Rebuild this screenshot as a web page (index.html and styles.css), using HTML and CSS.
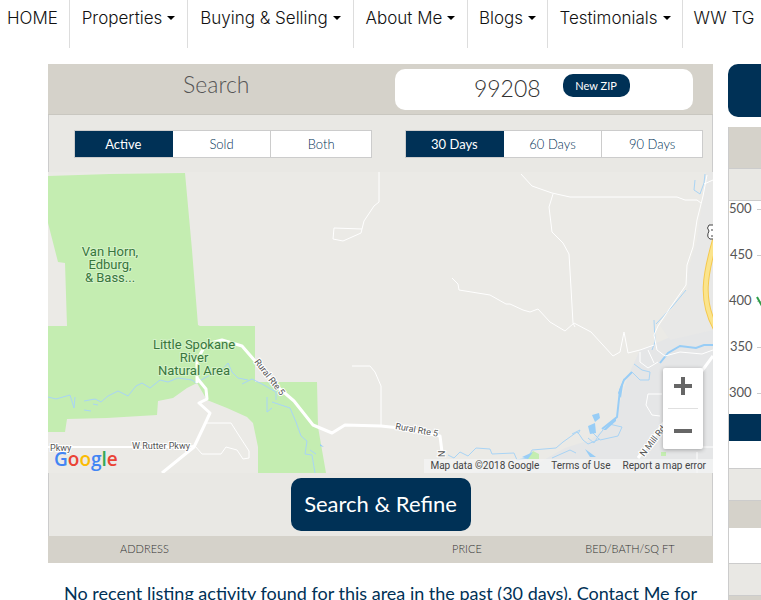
FILE: index.html
```html
<!DOCTYPE html>
<html lang="en">
<head>
    <meta charset="UTF-8">
    <meta name="viewport" content="width=device-width, initial-scale=1.0">
    <title>Search 99208</title>
    <link rel="stylesheet" href="styles.css">
</head>
<body>
    <nav class="main-nav">
        <a href="#">HOME</a>
        <a href="#" class="has-menu">Properties</a>
        <a href="#" class="has-menu">Buying &amp; Selling</a>
        <a href="#" class="has-menu">About Me</a>
        <a href="#" class="has-menu">Blogs</a>
        <a href="#" class="has-menu">Testimonials</a>
        <a href="#">WW TG</a>
    </nav>

    <div class="page">
        <main class="search-panel">
            <header class="panel-header">
                <h1>Search</h1>
                <div class="zip-box">
                    <span class="zip">99208</span>
                    <button class="zip-button">New ZIP</button>
                </div>
            </header>

            <div class="filters">
                <div class="btn-group">
                    <button class="active">Active</button>
                    <button>Sold</button>
                    <button>Both</button>
                </div>
                <div class="btn-group">
                    <button class="active">30 Days</button>
                    <button>60 Days</button>
                    <button>90 Days</button>
                </div>
            </div>

            <div class="map">
                <svg class="map-canvas" viewBox="48 172 665 301" preserveAspectRatio="xMidYMid slice">
                    <rect x="48" y="172" width="665" height="301" fill="#ebeae6"/>
                    <!-- built-up area -->
                    <path fill="#e5e6e7" d="M713 320L668 338 640 350 628 376 620 402 616 420 590 440 565 448 540 462 470 473H713Z"/>
                    <path fill="#e8e8e7" d="M713 172H706L697 240 688 270 687 290 660 325 670 340 713 330Z"/>
                    <!-- parks -->
                    <path fill="#c4edb1" d="M48 176L110 174 185 173 192 250 198 325 200 326H255V382H317L318 427 326 473H258V447L253 423 247 417 227 408 207 400 197 383 187 388 173 398 158 401 157 415 107 418 67 419 65 432H48V326H67L65 263 58 262 48 223Z"/>
                    <path fill="#c4edb1" d="M526 459L533 451 539 454V459ZM661 452H666V456H661Z"/>
                    <!-- water -->
                    <g class="water">
                        <path d="M48 397L56 399 70 395 74 408 75 397M84 401L95 399 101 402 108 396 118 391 128 396 136 386 142 383 150 388 160 380 168 382 178 378 192 380 196 383 210 375 222 370 228 363 232 372 238 378 248 380"/>
                        <path d="M84 410L91 411M93 404L98 405M242 384L252 379 262 384 276 392 276 400M267 397V412L272 408M272 402L290 408 296 422 301 436 307 441 305 454 312 455 315 473M310 450L316 454"/>
                        <path d="M448 455L454 458 460 452 468 456 476 448 490 449 492 454 514 453 517 460 528 458 532 450 556 448 563 442 577 432 579 434 583 440 588 444 600 439M578 434L580 430 572 434M588 438L594 443 599 435 603 430"/>
                        <path d="M552 458L570 450 576 453M592 432L600 440 618 436 622 427 609 424"/>
                        <path d="M634 364L642 370 650 372 649 380 640 380 632 372"/>
                        <path d="M654 320L655 342 652 350M656 324L672 307 686 290M695 180L694 190 700 194 704 183 705 174"/>
                    </g>
                    <path class="river" d="M602 429L617 417 620 390 624 380 632 372M660 363L668 353 680 346 696 348 704 345 713 345"/>
                    <path class="lake" d="M592 415L599 413 600 418 595 422ZM588 426L595 423 596 433 590 434ZM603 430L616 417V421L606 430ZM585 449L596 457 590 457ZM320 444L324 447 320 446ZM522 457L533 452 528 459ZM618 393L624 378 621 398Z"/>
                    <!-- minor roads -->
                    <g class="road minor">
                        <path d="M379 172V202L374 206 364 221 361 233 343 241 333 239 334 228 362 229"/>
                        <path d="M452 278L458 284 459 290 490 295 506 304 510 304 523 310 530 312 538 309 550 322 560 328 565 331 574 323 591 332 613 356 620 352 624 332 628 353 640 350 654 345"/>
                        <path d="M521 174L532 186 552 193 570 197H677L685 200 697 200 701 203M553 194L549 207 552 232 563 243 569 254 571 288 573 323 575 327"/>
                        <path d="M707 175L703 196 697 220 693 247 687 265 686 285 670 308 658 326 654 335 657 350 665 356 680 352 702 354 713 350M713 180L704 184"/>
                        <path d="M352 366H370L375 372 381 386V426"/>
                        <path d="M206 423H231L238 434 249 451 249 458 243 459 237 450 226 447 221 454H202L195 446"/>
                        <path d="M640 352V362L648 368 658 362M648 350L654 363M662 394H648L646 405 652 415 660 416M697 447H713M697 452V473"/>
                    </g>
                    <path class="road thick" d="M48 447H185L194 446"/>
                    <!-- main roads -->
                    <path class="road major" d="M197 383V360L206 344 222 340 242 346 255 361 280 389 294 401 313 425 332 433 345 425 381 426 400 428 440 436 442 452"/>
                    <path class="road major" d="M197 378L206 389 207 399 199 403 210 413 204 426 194 447 162 473M638 458L713 356"/>
                    <path fill="none" stroke="#f5c94e" stroke-width="6" d="M715 240C705 275 700 300 716 329"/>
                    <path fill="none" stroke="#fbe48c" stroke-width="4" d="M715 240C705 275 700 300 716 329"/>
                    <path fill="#fff" stroke="#444" d="M716 225H709Q706 228 709 231 706 237 710 239H716"/>
                    <path fill="none" stroke="#444" d="M711 230H714M711 236H714"/>

                    <g class="park-label">
                        <text x="110" y="256">Van Horn,</text>
                        <text x="110" y="269">Edburg,</text>
                        <text x="110" y="282">&amp; Bass...</text>
                        <text x="194" y="349">Little Spokane</text>
                        <text x="194" y="362">River</text>
                        <text x="194" y="375">Natural Area</text>
                    </g>
                    <g class="road-label">
                        <text x="50" y="451">Pkwy</text>
                        <text x="132" y="449">W Rutter Pkwy</text>
                        <text transform="translate(254 362) rotate(52)">Rural Rte 5</text>
                        <text transform="translate(395 429) rotate(10)">Rural Rte 5</text>
                        <text transform="translate(445 457) rotate(-90)">N</text>
                        <text transform="translate(644 457) rotate(-52)">N Mill Rd</text>
                    </g>
                </svg>
                <div class="google" aria-label="Google"><span class="b">G</span><span class="r">o</span><span class="y">o</span><span class="b">g</span><span class="g">l</span><span class="r">e</span></div>
                <div class="map-zoom">
                    <button aria-label="Zoom in">
                        <svg width="18" height="18" viewBox="0 0 18 18"><path d="M7 0h4v7h7v4h-7v7H7v-7H0V7h7z"/></svg>
                    </button>
                    <button aria-label="Zoom out">
                        <svg width="18" height="18" viewBox="0 0 18 18"><path d="M0 7h18v4H0z"/></svg>
                    </button>
                </div>
                <div class="map-credits">
                    <span>Map data ©2018 Google</span>
                    <a href="#">Terms of Use</a>
                    <a href="#">Report a map error</a>
                </div>
            </div>

            <div class="actions">
                <button class="refine-button">Search &amp; Refine</button>
            </div>

            <table class="listings">
                <thead>
                    <tr>
                        <th class="col-address">ADDRESS</th>
                        <td class="col-blank"></td>
                        <th class="col-price">PRICE</th>
                        <th class="col-size">BED/BATH/SQ FT</th>
                    </tr>
                </thead>
            </table>
            <p class="message">No recent listing activity found for this area in the past (30 days). Contact Me for</p>
        </main>

        <aside class="stats">
            <div class="stats-button"></div>
            <div class="stats-card">
                <div class="bar dark tall"></div>
                <div class="bar light"></div>
                <svg class="chart" width="32" height="213" viewBox="0 0 32 213">
                    <g class="axis">
                        <text x="0" y="12">500</text>
                        <text x="1" y="58">450</text>
                        <text x="0" y="104">400</text>
                        <text x="1" y="150">350</text>
                        <text x="0" y="196">300</text>
                    </g>
                    <path fill="#ccc" d="M28 8h4v1h-4zM28 54h4v1h-4zM28 100h4v1h-4zM28 146h4v1h-4zM28 192h4v1h-4z"/>
                    <path fill="none" stroke="#2e9e48" stroke-width="2" d="M28 96l5 9"/>
                </svg>
                <div class="bar navy"></div>
                <div class="bar white"></div>
                <div class="bar light"></div>
                <div class="bar dark"></div>
                <div class="bar white wide"></div>
                <div class="bar light"></div>
                <div class="bar dark"></div>
            </div>
        </aside>
    </div>
</body>
</html>
```

FILE: styles.css
```css
* {
    box-sizing: border-box;
}
html {
    overflow: hidden;
}
body {
    margin: 0;
    background: #fff;
    font-family: Lato, "Liberation Sans", sans-serif;
    color: #003156;
}
button {
    font-family: inherit;
    border: none;
    padding: 0;
    cursor: pointer;
}
a {
    text-decoration: none;
    color: inherit;
}

/* navigation */
.main-nav {
    display: grid;
    grid-template-columns: 70fr 118fr 166fr 114fr 80fr 135fr 78fr;
    height: 48px;
    font-family: Inter, sans-serif;
    font-size: 17px;
    font-weight: 300;
    line-height: 36px;
    color: #111;
}
.main-nav a {
    display: flex;
    justify-content: center;
    gap: 5px;
    min-width: 0;
    border-right: 1px solid #ddd;
    white-space: nowrap;
}
.main-nav a:first-child {
    padding-right: 4px;
}
.main-nav a:last-child {
    border-right: none;
    padding-left: 4px;
}
.has-menu::after {
    content: "";
    align-self: flex-start;
    margin-top: 16px;
    border: 4px solid transparent;
    border-top-color: #000;
    border-bottom: none;
}

.page {
    display: grid;
    grid-template-columns: minmax(0, 1fr) 33px;
    gap: 15px;
    padding: 16px 0 0 48px;
}

/* search panel */
.panel-header {
    display: grid;
    grid-template-columns: 1fr 1fr;
    height: 51px;
    background: #d5d2ca;
    border-bottom: 1px solid #c9c7c0;
}
.panel-header h1 {
    margin: 0;
    padding-left: 4px;
    text-align: center;
    font-size: 23px;
    font-weight: 300;
    line-height: 40px;
    color: #555;
}
.zip-box {
    display: flex;
    justify-content: center;
    gap: 22px;
    height: 41px;
    margin: 5px 20px 0 14px;
    padding: 5px 0 0 16px;
    background: #fff;
    border-radius: 10px;
}
.zip {
    font-size: 23px;
    font-weight: 300;
    line-height: 29px;
    color: #333;
}
.zip-button {
    width: 67px;
    height: 23px;
    border-radius: 10px;
    background: #003156;
    color: #fff;
    font-size: 11px;
}
.filters {
    display: grid;
    grid-template-columns: 1fr 1fr;
    gap: 33px;
    padding: 15px 9px 14px 25px;
    background: #e9e8e4;
    border: solid #ccc;
    border-width: 0 1px;
}
.btn-group {
    display: grid;
    grid-template-columns: 98fr 99fr 100fr;
    height: 28px;
    border: 1px solid #ccc;
    background: #fff;
}
.btn-group button {
    background: #fff;
    border-right: 1px solid #ccc;
    color: #003156;
    font-size: 13px;
    font-weight: 300;
}
.btn-group button:last-child {
    border-right: none;
}
.btn-group .active {
    background: #003156;
    border-color: #003156;
    color: #fff;
    font-weight: 400;
}

/* map */
.map {
    position: relative;
    height: 301px;
    overflow: hidden;
    font-family: Roboto, sans-serif;
}
.map-canvas {
    display: block;
    width: 100%;
    height: 100%;
}
.water {
    fill: none;
    stroke: #a9d4f5;
    stroke-width: 1;
}
.river {
    fill: none;
    stroke: #98cdf6;
    stroke-width: 2;
}
.lake {
    fill: #98cdf6;
}
.road {
    fill: none;
    stroke: #fff;
    stroke-linejoin: round;
}
.minor {
    stroke-width: 1;
}
.thick {
    stroke-width: 2;
}
.major {
    stroke-width: 3;
}
.park-label {
    font-size: 13px;
    text-anchor: middle;
    fill: #38763d;
    stroke: #d6f3c9;
    stroke-width: 2;
    paint-order: stroke;
}
.road-label {
    font-size: 9px;
    fill: #555;
    stroke: #fff;
    stroke-width: 2;
    paint-order: stroke;
}
.google {
    position: absolute;
    left: 6px;
    bottom: 2px;
    font-family: "Open Sans", sans-serif;
    font-size: 19px;
    font-weight: 600;
    line-height: 24px;
}
.google .b {
    color: #4285f4;
}
.google .r {
    color: #ea4335;
}
.google .y {
    color: #fbbc05;
}
.google .g {
    color: #34a853;
}
.map-zoom {
    position: absolute;
    right: 10px;
    bottom: 24px;
    display: grid;
    width: 40px;
    height: 81px;
    background: #fff;
    border-radius: 2px;
    box-shadow: 0 1px 4px rgba(0, 0, 0, 0.3);
}
.map-zoom button {
    display: flex;
    align-items: center;
    justify-content: center;
    margin: 0 5px;
    padding-bottom: 4px;
    background: none;
}
.map-zoom button + button {
    border-top: 1px solid #e0e0e0;
    padding: 4px 0 0;
}
.map-zoom svg {
    fill: #666;
}
.map-credits {
    position: absolute;
    right: 0;
    bottom: 0;
    display: flex;
    gap: 12px;
    padding: 0 7px 0 6px;
    background: rgba(245, 245, 245, 0.7);
    font-size: 10px;
    line-height: 14px;
    color: #444;
    white-space: nowrap;
}

.actions {
    padding: 5px 0;
    background: #e9e8e4;
    border: solid #ccc;
    border-width: 0 1px;
    text-align: center;
}
.refine-button {
    display: block;
    width: 180px;
    height: 53px;
    margin: 0 auto;
    padding-bottom: 2px;
    border-radius: 10px;
    background: #003156;
    color: #fff;
    font-size: 22px;
}
.listings {
    width: 100%;
    table-layout: fixed;
    border-collapse: collapse;
    background: #d5d2ca;
}
.listings th {
    height: 27px;
    padding: 0 0 2px;
    font-size: 11px;
    font-weight: 300;
    color: #333;
    text-align: center;
}
.col-address {
    width: 29%;
}
.col-blank {
    width: 22%;
}
.col-price {
    width: 24%;
}
.col-size {
    width: 25%;
}
.message {
    margin: 16px 0 0;
    text-align: center;
    font-size: 18px;
    line-height: 28px;
    white-space: nowrap;
}

/* market stats */
.stats-button {
    height: 53px;
    margin-bottom: 10px;
    border-radius: 10px 0 0 10px;
    background: #003156;
}
.stats-card {
    border-left: 1px solid #ccc;
}
.bar {
    height: 27px;
}
.bar.dark {
    background: #d5d2ca;
}
.bar.tall {
    height: 41px;
}
.bar.light {
    height: 33px;
    background: #e9e8e4;
    border: solid #ccc;
    border-width: 1px 0;
}
.bar.wide {
    height: 35px;
}
.bar.navy {
    background: #003156;
}
.chart {
    display: block;
}
.axis {
    font-family: Lato, sans-serif;
    font-size: 13px;
    fill: #555;
}
```
